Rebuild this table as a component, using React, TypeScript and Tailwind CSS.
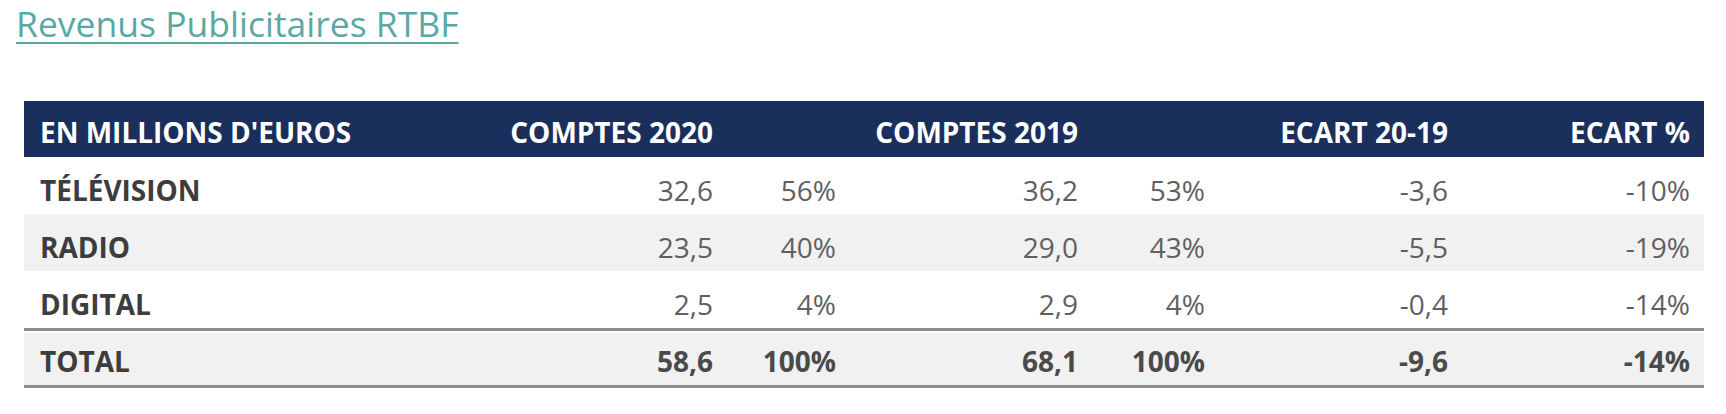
const rows = [
  { label: 'TÉLÉVISION', v20: '32,6', p20: '56%', v19: '36,2', p19: '53%', diff: '-3,6', pct: '-10%', shade: false },
  { label: 'RADIO', v20: '23,5', p20: '40%', v19: '29,0', p19: '43%', diff: '-5,5', pct: '-19%', shade: true },
  { label: 'DIGITAL', v20: '2,5', p20: '4%', v19: '2,9', p19: '4%', diff: '-0,4', pct: '-14%', shade: false },
];

const grid = 'grid grid-cols-[460px_213px_123px_242px_127px_243px_242px] pl-4 pr-[14px] items-center';

export default function App() {
  return (
    <div className="min-h-[414px] w-[1726px] bg-white pt-[1px]">
      <a
        href="#"
        className="ml-[16px] inline-block font-['Open_Sans',sans-serif] text-[35.5px] leading-[44px] text-[#5aa8a6] underline decoration-2 underline-offset-[5px]"
      >
        Revenus Publicitaires RTBF
      </a>

      <div className="ml-[24px] mt-[56px] w-[1680px] font-['Open_Sans',sans-serif] text-[28px] leading-[36px]">
        <div className={`${grid} h-[56px] bg-[#1b2f5c] pt-[6px] font-bold text-white`}>
          <span>EN MILLIONS D'EUROS</span>
          <span className="text-right">COMPTES 2020</span>
          <span />
          <span className="text-right">COMPTES 2019</span>
          <span />
          <span className="text-right">ECART 20-19</span>
          <span className="text-right">ECART %</span>
        </div>

        {rows.map((r) => (
          <div key={r.label} className={`${grid} h-[57px] pt-2 text-[#606060] ${r.shade ? 'bg-[#f1f1f1]' : 'bg-white'}`}>
            <span className="font-bold text-[#3d3d3d]">{r.label}</span>
            <span className="text-right">{r.v20}</span>
            <span className="text-right">{r.p20}</span>
            <span className="text-right">{r.v19}</span>
            <span className="text-right">{r.p19}</span>
            <span className="text-right">{r.diff}</span>
            <span className="text-right">{r.pct}</span>
          </div>
        ))}

        <div className="h-[3px] bg-[#8c8c8c]" />
        <div className="h-[2px] bg-white" />
        <div className={`${grid} h-[52px] bg-[#f1f1f1] pt-1 font-bold text-[#4a4a4a]`}>
          <span className="text-[#3d3d3d]">TOTAL</span>
          <span className="text-right">58,6</span>
          <span className="text-right">100%</span>
          <span className="text-right">68,1</span>
          <span className="text-right">100%</span>
          <span className="text-right">-9,6</span>
          <span className="text-right">-14%</span>
        </div>
        <div className="h-[3px] bg-[#8c8c8c]" />
      </div>
    </div>
  );
}
